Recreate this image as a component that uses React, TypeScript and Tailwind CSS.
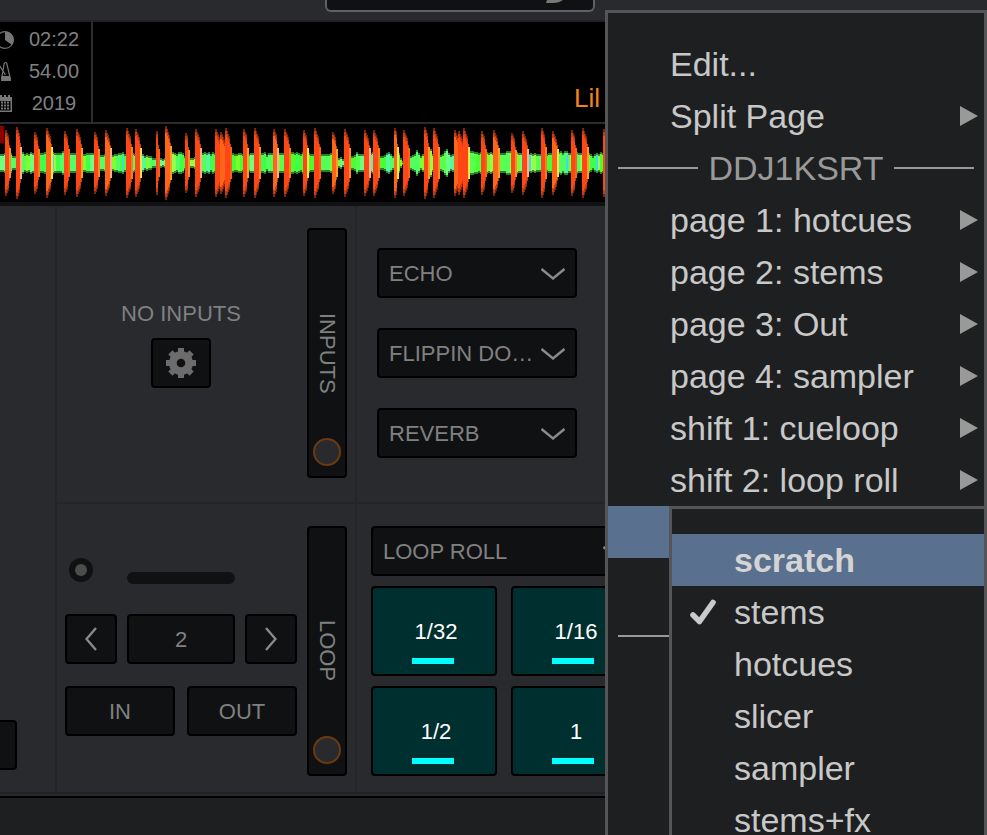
import React from 'react';
import clsx from 'clsx';

// x, amplitude and width of every beat in the overview
const BEATS = [
  [5, 33, 4], [16, 36, 4], [34, 31, 4], [46, 35, 5], [64, 32, 4], [76, 34, 5], [94, 31, 4], [105, 33, 5],
  [126, 35, 5], [135, 34, 5], [156, 32, 2], [165, 37, 5], [185, 30, 3], [195, 34, 5], [215, 34, 6], [220, 31, 6],
  [225, 35, 5], [243, 34, 4], [254, 35, 5], [273, 34, 4], [284, 34, 5], [303, 33, 4], [314, 35, 5], [332, 31, 4],
  [344, 34, 5], [364, 33, 5], [373, 33, 5], [394, 35, 3], [403, 33, 5], [424, 36, 4], [433, 35, 5], [454, 33, 4],
  [458, 32, 6], [463, 35, 5], [481, 32, 4], [493, 33, 5], [511, 30, 4], [522, 32, 5], [541, 35, 4], [552, 32, 5],
  [571, 33, 4], [582, 35, 5], [603, 34, 5],
];

const ENVELOPE = [
  [0, 9], [10, 8], [14, 5], [22, 9], [55, 9], [62, 10], [76, 9], [96, 8], [110, 7], [120, 9], [133, 8], [140, 8],
  [146, 6], [154, 4], [160, 3], [164, 5], [170, 9], [183, 8], [188, 4], [193, 3], [200, 9], [240, 8], [300, 9],
  [318, 7], [330, 8], [337, 4], [342, 3], [347, 8], [351, 4], [356, 9], [368, 7], [374, 9], [380, 5], [387, 10],
  [394, 5], [399, 9], [401, 1], [403, 1], [407, 9], [411, 5], [416, 11], [421, 5], [424, 15], [430, 12], [434, 5],
  [440, 7], [446, 12], [450, 6], [456, 8], [470, 10], [500, 8], [508, 10], [545, 8], [570, 10], [586, 9], [592, 6], [600, 9],
];

const GREENS = ['#49ff33', '#58ff4e', '#7dff2e', '#52ff62', '#6dff80', '#55f7a0', '#40ff48', '#93ff4a'];
const ACCENTS = ['#ff8a2c', '#ffb08a', '#ff7a1e', '#ffe04a', '#ff5f1a', '#ff9c2c'];

function envelopeAt(x: number) {
  const next = ENVELOPE.findIndex((p) => p[0] > x);
  if (next < 1) return 9;
  const [x0, a0] = ENVELOPE[next - 1];
  const [x1, a1] = ENVELOPE[next];
  return a0 + ((a1 - a0) * (x - x0)) / (x1 - x0);
}

const noise = (n: number) => {
  const v = Math.sin(n * 12.9898) * 43758.5453;
  return v - Math.floor(v);
};

const Waveform = () => {
  const mid = 39;
  const body: React.ReactNode[] = [];
  for (let x = 0; x < 608; x += 2) {
    const a = Math.max(1, Math.round(envelopeAt(x) + (noise(x) - 0.4) * 2.5));
    const colour = GREENS[Math.floor(noise(Math.floor(x / 5) + 3) * GREENS.length)];
    body.push(
      <g key={x} fill={colour}>
        <rect x={x} y={mid - a - 1} width={2} height={a * 2 + 2} opacity={0.5} />
        <rect x={x} y={mid - a + 1} width={2} height={Math.max(1, a * 2 - 2)} />
      </g>
    );
  }
  return (
    <svg width="608" height="78" viewBox="0 0 608 78" shapeRendering="crispEdges" aria-hidden="true" className="block">
      {body}
      {[52, 122, 529, 566, 596].map((x) => (
        <rect key={x} x={x} y={31} width={2} height={16} fill="#45d8e8" />
      ))}
      {BEATS.map(([x, amp, w], i) => (
        <g key={x}>
          <rect x={x + w} y={mid - amp * 0.55} width={1} height={amp * 1.1} fill="#a8480f" />
          <rect x={x + w} y={mid - amp * 0.45} width={2} height={amp * 0.9} fill={ACCENTS[i % ACCENTS.length]} />
          {Array.from({ length: w }, (_, c) => {
            const a = Math.round(amp * (c < 2 ? 1 : 1 - (c - 1) * 0.08));
            return (
              <g key={c}>
                <rect x={x + c} y={mid - a} width={1} height={a * 2} fill="#7d2408" />
                <rect x={x + c} y={mid - a + 3} width={1} height={a * 2 - 6} fill="#c93b10" />
                <rect x={x + c} y={mid - a + 7} width={1} height={a * 2 - 14} fill={i % 4 === 3 ? '#ff6518' : '#ff4716'} />
              </g>
            );
          })}
        </g>
      ))}
      <rect x={0} y={2} width={4} height={17} fill="#8c0000" />
    </svg>
  );
};

const ClockIcon = () => (
  <svg width="20" height="20" viewBox="0 0 20 20" className="-ml-[5px]" aria-hidden="true">
    <circle cx="10" cy="11" r="8.4" fill="none" stroke="#6b6b6b" strokeWidth="1.2" />
    <path d="M10 2.5A8.5 8.5 0 0 1 17 16L10 11Z" fill="#777" />
  </svg>
);

const MetronomeIcon = () => (
  <svg width="20" height="20" viewBox="0 0 20 20" className="-ml-[5px]" aria-hidden="true">
    <path d="M6.5 18.5 9.2 2.5Q10.500 0.500 11.800 2.500L15.500 18.500M4.500 4.500 10.500 14" fill="none" stroke="#777" strokeWidth="1.2" />
    <path d="M6.5 15H15l1 5H6Z" fill="#777" />
  </svg>
);

const CalendarIcon = () => (
  <svg width="20" height="20" viewBox="0 0 20 20" className="-ml-[5px]" aria-hidden="true">
    <path d="M3 4h2V2h2v2h2V2h2v2h2V2h2v2h2v15H3ZM4.500 8v9.500h11V8Z" fill="#777" fillRule="evenodd" />
    <path d="M6 9.500h9M6 12.500h9M6 15.500h9" stroke="#777" strokeWidth="2" strokeDasharray="2 1" />
  </svg>
);

const GearIcon = () => (
  <svg width="32" height="32" viewBox="-16 -16 32 32" fill="#6c6c6c" aria-hidden="true">
    {[0, 45, 90, 135].map((r) => (
      <rect key={r} x="-3" y="-15" width="6" height="30" transform={`rotate(${r})`} />
    ))}
    <circle r="12" />
    <circle r="4.3" fill="#101113" />
  </svg>
);

const Chevron = ({ d, w, h }: { d: string; w: number; h: number }) => (
  <svg width={w} height={h} viewBox={`0 0 ${w} ${h}`} fill="none" stroke="#8a8a8a" strokeWidth="2.4" aria-hidden="true">
    <path d={d} />
  </svg>
);

const box = 'rounded-sm border-2 border-black bg-[#101113]';

const Select = ({ label, value, className }: { label: string; value: string; className?: string }) => (
  <div className={clsx('relative', className)}>
    <select aria-label={label} className={clsx(box, 'block h-[50px] w-full appearance-none pl-[10px] text-[22px] text-[#808080] outline-none')}>
      <option>{value}</option>
    </select>
    <span className="pointer-events-none absolute right-3 top-5">
      <Chevron w={24} h={13} d="M0.5 1 12 10.5 23.5 1" />
    </span>
  </div>
);

const DeckButton = ({ className, children, ...rest }: React.ComponentProps<'button'>) => (
  <button className={clsx(box, 'flex h-[50px] items-center justify-center', className)} {...rest}>
    {children}
  </button>
);

const SideTab = ({ label }: { label: string }) => (
  <button className={clsx(box, 'relative flex h-[250px] w-10 shrink-0 items-center justify-center')}>
    <span className="[writing-mode:vertical-rl]">{label}</span>
    <span className="absolute bottom-[10px] left-1 size-7 rounded-full border-2 border-[#6b3a10] bg-[#292a2e]" />
  </button>
);

const Pad = ({ label }: { label: string }) => (
  <button className="relative h-[90px] rounded-sm border-2 border-black bg-[#002f2f] pl-1 text-white">
    {label}
    <span className="absolute bottom-[10px] left-[39px] h-[6px] w-[42px] bg-[#00ffff]" />
  </button>
);

const INFO = [
  { icon: <ClockIcon />, text: '02:22' },
  { icon: <MetronomeIcon />, text: '54.00' },
  { icon: <CalendarIcon />, text: '2019' },
];

const PAGES = [
  'page 1: hotcues',
  'page 2: stems',
  'page 3: Out',
  'page 4: sampler',
  'shift 1: cueloop',
  'shift 2: loop roll',
];

const MODES = ['scratch', 'stems', 'hotcues', 'slicer', 'sampler', 'stems+fx'];

const MenuItem = ({ label, arrow }: { label: string; arrow?: boolean }) => (
  <li>
    <button className="flex h-[52px] w-full items-center justify-between pl-[62px] pr-[6px] text-left whitespace-nowrap">
      {label}
      {arrow && (
        <svg width="18" height="20" viewBox="0 0 18 20" fill="#999" aria-hidden="true">
          <path d="M0 0 18 10 0 20Z" />
        </svg>
      )}
    </button>
  </li>
);

const PadMenu = () => (
  <ul className="absolute -right-[3px] left-[61px] top-0 border-[3px] border-[#555558] bg-[#1e1f21] py-[25px]">
    {MODES.map((mode) => (
      <li key={mode}>
        <button
          className={clsx(
            'relative flex h-[52px] w-full items-center pl-[62px] text-left',
            mode === 'scratch' && 'bg-[#59708f] font-bold text-[#d4d4d4]'
          )}
        >
          {mode === 'stems' && (
            <svg width="28" height="28" viewBox="0 0 28 28" fill="none" stroke="#cacaca" strokeWidth="5.6" strokeLinecap="round" strokeLinejoin="round" className="absolute left-[17px] top-3" aria-hidden="true">
              <path d="M4 17 10.5 23.5 24 4.5" />
            </svg>
          )}
          {mode}
        </button>
      </li>
    ))}
  </ul>
);

const ContextMenu = () => (
  <ul className="absolute left-[605px] right-0 top-[10px] h-screen border-[3px] border-[#555558] bg-[#1e1f21] py-[25px] text-[34px] text-[#c8c8c8]">
    <MenuItem label="Edit..." />
    <MenuItem label="Split Page" arrow />
    <li className="flex h-[52px] items-center gap-[10px] px-[10px] text-[#999]">
      <span className="h-[2px] flex-1 bg-[#999]" />
      DDJ1KSRT
      <span className="h-[2px] flex-1 bg-[#999]" />
    </li>
    {PAGES.map((page) => (
      <MenuItem key={page} label={page} arrow />
    ))}
    <li className="relative h-[52px] bg-[#59708f]">
      <PadMenu />
    </li>
    <li className="mt-[52px] flex h-[52px] items-center px-[10px]">
      <span className="h-[2px] flex-1 bg-[#999]" />
    </li>
  </ul>
);

export default function App() {
  return (
    <div className="relative flex h-screen w-full flex-col overflow-hidden bg-[#292a2e] font-['Liberation_Sans',Arial,sans-serif] text-[22px] text-[#808080]">
      {/* Browser search strip */}
      <header className="h-[22px] shrink-0 border-b-2 border-[#212226] pl-[325px]">
        <div className="flex h-3 w-[270px] justify-end rounded-b-md border-2 border-t-0 border-[#606164] bg-[#101113] pr-7">
          <svg width="20" height="4" viewBox="0 0 20 4" fill="#777" aria-hidden="true">
            <path d="M2 0H18Q14 3 8 3H1Z" />
          </svg>
        </div>
      </header>

      {/* Track info */}
      <section className="flex h-[102px] shrink-0 border-b-2 border-[#2c2b30] bg-black">
        <div className="flex w-[93px] flex-col border-r-2 border-[#2c2b30] pt-px text-[20px]">
          {INFO.map(({ icon, text }) => (
            <div key={text} className="flex h-8 items-center">
              {icon}
              <span className="ml-[13px] w-[52px] text-center">{text}</span>
            </div>
          ))}
        </div>
        <div className="flex items-end pb-2 pl-[481px] text-[26px] leading-8 text-[#f58218]">Lil</div>
      </section>

      <section className="shrink-0 overflow-hidden border-b-4 border-[#101113] bg-black">
        <Waveform />
      </section>

      {/* Deck panels */}
      <main className="flex h-[588px] shrink-0 border-b-2 border-[#212226]">
        <div className="w-[57px] border-r-2 border-[#242528] pt-[514px]">
          <DeckButton aria-label="Deck" className="w-[17px] rounded-l-none border-l-0" />
        </div>

        <div className="w-[300px] border-r-2 border-[#242528]">
          <div className="flex h-[298px] gap-[10px] border-b-2 border-[#242528] px-2 pt-[22px]">
            <div className="flex h-[250px] flex-1 flex-col items-center pt-[70px]">
              <p className="h-10 leading-8">NO INPUTS</p>
              <DeckButton aria-label="Input settings" className="w-[60px]">
                <GearIcon />
              </DeckButton>
            </div>
            <SideTab label="INPUTS" />
          </div>

          <div className="flex gap-[10px] px-2 pt-[22px]">
            <div className="flex flex-1 flex-col">
              <div className="flex h-[88px] items-start pt-8">
                <span className="ml-1 flex size-6 items-center justify-center rounded-full bg-[#101113]">
                  <span className="size-3 rounded-full bg-[#4c4c4c]" />
                </span>
                <span className="ml-[34px] mt-[14px] h-3 w-[108px] rounded-full bg-[#101113]" />
              </div>
              <div className="flex gap-[10px]">
                <DeckButton aria-label="Halve loop" className="w-[52px]">
                  <Chevron w={12} h={24} d="M11 1 1.5 12 11 23" />
                </DeckButton>
                <DeckButton className="flex-1">2</DeckButton>
                <DeckButton aria-label="Double loop" className="w-[52px]">
                  <Chevron w={12} h={24} d="M1 1 10.5 12 1 23" />
                </DeckButton>
              </div>
              <div className="mt-[22px] flex gap-3">
                <DeckButton className="flex-1">IN</DeckButton>
                <DeckButton className="flex-1">OUT</DeckButton>
              </div>
            </div>
            <SideTab label="LOOP" />
          </div>
        </div>

        <div className="flex-1">
          <div className="flex h-[298px] flex-col gap-[30px] border-b-2 border-[#242528] pl-5 pt-[42px]">
            <Select label="Effect 1" value="ECHO" className="w-[200px]" />
            <Select label="Effect 2" value="FLIPPIN DO…" className="w-[200px]" />
            <Select label="Effect 3" value="REVERB" className="w-[200px]" />
          </div>
          <div className="pl-[14px] pt-[22px]">
            <Select label="Pad page" value="LOOP ROLL" className="w-[268px]" />
            <div className="mt-[10px] grid grid-cols-[126px_126px] gap-x-[14px] gap-y-[10px]">
              {['1/32', '1/16', '1/2', '1'].map((size) => (
                <Pad key={size} label={size} />
              ))}
            </div>
          </div>
        </div>
      </main>

      <footer className="mt-[2px] flex-1 border-t-2 border-black bg-[#1e1f21]" />

      <ContextMenu />
    </div>
  );
}
